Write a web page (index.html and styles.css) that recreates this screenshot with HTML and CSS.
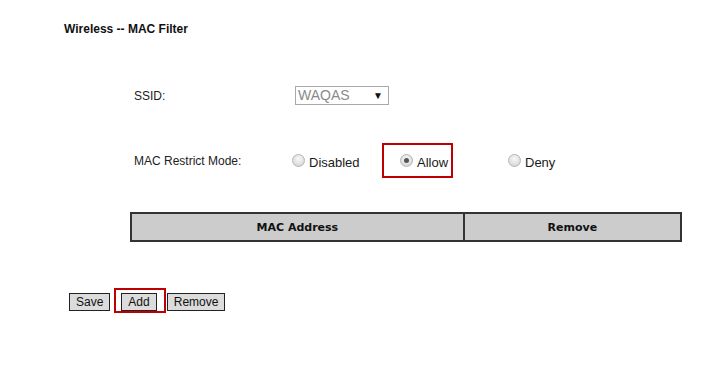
FILE: index.html
```html
<!DOCTYPE html>
<html>
<head>
<meta charset="utf-8">
<link rel="stylesheet" href="styles.css">
</head>
<body>
<div class="title">Wireless -- MAC Filter</div>
<div class="form">
  <div class="row ssid-row">
    <span class="label">SSID:</span>
    <div class="select"><span class="select-text">WAQAS</span><span class="arrow">&#9660;</span></div>
  </div>
  <div class="row mode-row">
    <span class="label">MAC Restrict Mode:</span>
    <div class="radios">
      <label class="opt"><span class="radio"></span><span class="opt-text">Disabled</span></label>
      <label class="opt highlighted"><span class="radio checked"></span><span class="opt-text">Allow</span></label>
      <label class="opt"><span class="radio"></span><span class="opt-text">Deny</span></label>
    </div>
  </div>
</div>
<table class="mac-table">
  <tr>
    <th class="col-mac">MAC Address</th>
    <th class="col-remove">Remove</th>
  </tr>
</table>
<div class="buttons">
  <button class="btn save">Save</button>
  <span class="btn-wrap"><button class="btn">Add</button></span>
  <button class="btn remove">Remove</button>
</div>
</body>
</html>
```
FILE: styles.css
```css
html, body {
  margin: 0;
  padding: 0;
  background: #fff;
  font-family: "Liberation Sans", Arial, sans-serif;
  color: #1a1a1a;
}

.title {
  margin: 22px 0 0 64px;
  font-size: 12px;
  font-weight: bold;
  line-height: 14px;
  color: #111;
}

.form {
  margin-left: 134px;
}

.row {
  display: flex;
  align-items: center;
}

.label {
  width: 161px;
  font-size: 12px;
  color: #222;
}

.ssid-row {
  margin-top: 50px;
  height: 19px;
}

.select {
  width: 92px;
  height: 17px;
  border: 1px solid #a9a9a9;
  display: flex;
  align-items: center;
  justify-content: space-between;
  box-sizing: content-box;
}

.select-text {
  font-size: 14px;
  color: #8a8a8a;
  padding-left: 2px;
  line-height: 17px;
}

.arrow {
  font-size: 10px;
  color: #111;
  padding-right: 5px;
}

.mode-row {
  margin-top: 46px;
  height: 20px;
}

.radios {
  display: flex;
  margin-left: -3px;
}

.opt {
  width: 108px;
  display: flex;
  align-items: center;
  position: relative;
}

.radio {
  width: 11px;
  height: 11px;
  border-radius: 50%;
  border: 1px solid #b4b4b4;
  background: radial-gradient(circle at 50% 35%, #f8f8f8 0%, #dcdcdc 70%, #c8c8c8 100%);
  position: relative;
  margin-top: -2px;
}

.radio.checked::after {
  content: "";
  position: absolute;
  left: 3px;
  top: 3px;
  width: 5px;
  height: 5px;
  border-radius: 50%;
  background: #555;
}

.opt-text {
  font-size: 13px;
  color: #1a1a1a;
  margin-left: 4px;
  margin-top: 2px;
}

.highlighted::before {
  content: "";
  position: absolute;
  left: -18px;
  top: -10px;
  width: 67px;
  height: 31px;
  border: 2px solid #c00000;
}

.mac-table {
  margin: 41px 0 0 130px;
  border-collapse: collapse;
  width: 552px;
}

.mac-table th {
  height: 26px;
  padding: 0;
  background: #cccccc;
  border: 2px solid #333;
  font-family: "DejaVu Sans", Tahoma, sans-serif;
  font-size: 11px;
  font-weight: bold;
  color: #111;
  text-align: center;
}

.col-mac {
  width: 332px;
}

.col-remove {
  width: 216px;
}

.buttons {
  margin: 46px 0 0 69px;
  display: flex;
  align-items: flex-start;
}

.btn {
  font-family: "Liberation Sans", Arial, sans-serif;
  font-size: 12px;
  height: 18px;
  line-height: 14px;
  padding: 0 6px;
  background: #dcdcdc;
  border: 1px solid #222;
  color: #111;
  margin: 0;
  border-radius: 0;
}

.save,
.remove {
  margin-top: 5px;
}

.btn-wrap {
  display: flex;
  border: 2px solid #c00000;
  padding: 3px 7px 0 5px;
  margin: 0 1px 0 4px;
}
```
